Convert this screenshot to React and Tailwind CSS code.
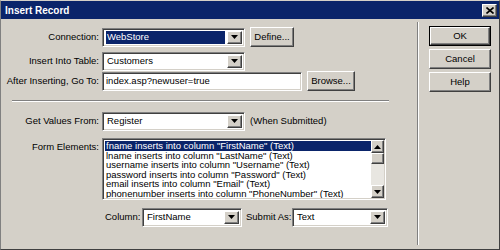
// Insert Record dialog (classic Windows look)
const FONT = { fontFamily: '"Liberation Sans", Arial, sans-serif' };

const sunken = 'border border-t-[#808080] border-l-[#808080] border-b-white border-r-white shadow-[inset_1px_1px_0_#404040,inset_-1px_-1px_0_#d4d0c8]';
const raised = 'border border-t-white border-l-white border-b-[#404040] border-r-[#404040] shadow-[inset_-1px_-1px_0_#808080,inset_1px_1px_0_#d4d0c8]';

function Arrow({ up = false }) {
  return (
    <svg width="7" height="4" viewBox="0 0 7 4" className={up ? 'rotate-180' : ''}>
      <path d="M0 0h7L3.5 4z" fill="#000" />
    </svg>
  );
}

function DropButton() {
  return (
    <div className={`w-[15px] h-full flex items-center justify-center bg-[#d4d0c8] ${raised}`}>
      <Arrow />
    </div>
  );
}

function Select({ value, width, selected = false }) {
  return (
    <div className={`flex items-stretch h-[19px] shrink-0 bg-white p-[2px] ${sunken}`} style={{ width }}>
      <div className="flex-1 flex items-center pl-[1px] pr-[2px] min-w-0">
        <span
          className={`flex-1 h-full flex items-center px-[1px] leading-none ${selected ? 'bg-[#0a246a] text-white' : 'text-black'}`}
        >
          {value}
        </span>
      </div>
      <DropButton />
    </div>
  );
}

function Button({ children, width, isDefault = false }) {
  return (
    <div className={`h-[20px] ${isDefault ? 'border border-black' : ''}`} style={{ width }}>
      <div className={`h-full flex items-center justify-center bg-[#d4d0c8] text-black ${raised}`}>
        {children}
      </div>
    </div>
  );
}

function Label({ children }) {
  return <div className="w-[101px] shrink-0 text-right pr-[3px] text-black">{children}</div>;
}

const items = [
  'fname inserts into column "FirstName" (Text)',
  'lname inserts into column "LastName" (Text)',
  'username inserts into column "Username" (Text)',
  'password inserts into column "Password" (Text)',
  'email inserts into column "Email" (Text)',
  'phonenumber inserts into column "PhoneNumber" (Text)',
];

function ListBox() {
  return (
    <div className={`flex h-[62px] w-[284px] bg-white p-[1px] ${sunken}`}>
      <div className="flex-1 flex flex-col min-w-0 overflow-hidden pt-[1px] pl-[1px]">
        {items.map((t, i) => (
          <div
            key={t}
            className={`h-[9.5px] leading-[9.5px] pl-[1px] whitespace-nowrap ${i === 0 ? 'bg-[#0a246a] text-white' : 'text-black'}`}
          >
            {t}
          </div>
        ))}
      </div>
      <div className="w-[13px] flex flex-col bg-[#e8e6e1]">
        <div className={`h-[13px] flex items-center justify-center bg-[#d4d0c8] ${raised}`}>
          <Arrow up />
        </div>
        <div className={`h-[11px] bg-[#d4d0c8] ${raised}`} />
        <div className="flex-1" />
        <div className={`h-[13px] flex items-center justify-center bg-[#d4d0c8] ${raised}`}>
          <Arrow />
        </div>
      </div>
    </div>
  );
}

export default function App() {
  return (
    <div
      className="w-[500px] h-[250px] flex flex-col bg-[#d4d0c8] border border-t-[#d4d0c8] border-l-[#808080] border-b-[#404040] border-r-[#404040] text-[9.5px] select-none overflow-hidden"
      style={FONT}
    >
      {/* Title bar */}
      <div className="h-[18px] shrink-0 bg-[#0a246a] flex items-center justify-between pl-[4px] pr-[2px]">
        <span className="text-white font-bold text-[10px]">Insert Record</span>
        <div className={`w-[15px] h-[13px] flex items-center justify-center bg-[#d4d0c8] ${raised}`}>
          <svg width="8" height="7" viewBox="0 0 8 7">
            <path d="M0.5 0.5L7.5 6.5M7.5 0.5L0.5 6.5" stroke="#000" strokeWidth="1.6" />
          </svg>
        </div>
      </div>

      <div className="flex-1 flex">
        {/* Form area */}
        <div className="w-[416px] flex flex-col pt-[8px]">
          <div className="flex items-center h-[20px]">
            <Label>Connection:</Label>
            <Select value="WebStore" width={143} selected />
            <div className="ml-[5px]">
              <Button width={44}>Define...</Button>
            </div>
          </div>
          <div className="flex items-center h-[20px] mt-[4px]">
            <Label>Insert Into Table:</Label>
            <Select value="Customers" width={143} />
          </div>
          <div className="flex items-center h-[20px]">
            <Label>After Inserting, Go To:</Label>
            <div className={`w-[200px] h-[19px] bg-white flex items-center pl-[3px] ${sunken}`}>
              index.asp?newuser=true
            </div>
            <div className="ml-[5px]">
              <Button width={48}>Browse...</Button>
            </div>
          </div>

          <div className="ml-[11px] w-[377px] mt-[9px] border-t border-t-[#808080] border-b border-b-white" />

          <div className="flex items-center h-[20px] mt-[9px]">
            <Label>Get Values From:</Label>
            <Select value="Register" width={143} />
            <span className="ml-[5px] text-black">(When Submitted)</span>
          </div>

          <div className="flex mt-[7px]">
            <Label>
              <div className="mt-[2px]">Form Elements:</div>
            </Label>
            <ListBox />
          </div>

          <div className="flex items-center h-[20px] mt-[7px] pl-[104px]">
            <span className="w-[37px] shrink-0 text-black">Column:</span>
            <Select value="FirstName" width={100} />
            <span className="w-[50px] shrink-0 pl-[4px] whitespace-nowrap text-black">Submit As:</span>
            <Select value="Text" width={96} />
          </div>
        </div>

        {/* Vertical divider */}
        <div className="w-[2px] mt-[3px] mb-[4px] border-l border-l-[#808080] border-r border-r-white" />

        {/* Buttons */}
        <div className="flex-1 flex flex-col items-start pl-[10px] pt-[7px] gap-[3px]">
          <Button width={62} isDefault>OK</Button>
          <Button width={62}>Cancel</Button>
          <Button width={62}>Help</Button>
        </div>
      </div>
    </div>
  );
}
